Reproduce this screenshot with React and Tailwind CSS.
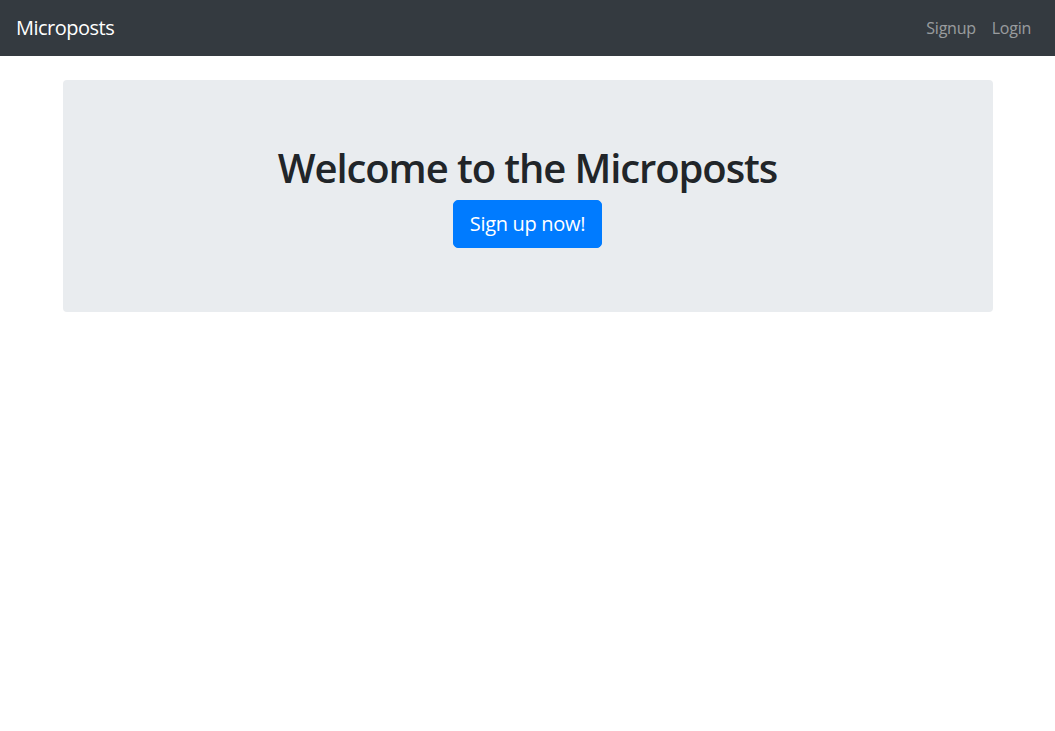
export default function App() {
  return (
    <div className="min-h-screen bg-white font-['Open_Sans','Noto_Sans',sans-serif] text-[#212529]">
      {/* Navbar */}
      <nav className="h-14 bg-[#343a40] flex items-center px-4">
        <a href="#" className="text-white text-[20px] leading-[30px] py-[5px] mr-4 tracking-[-0.5px]">Microposts</a>
        <ul className="ml-auto flex">
          <li><a href="#" className="block px-2 py-2 text-[16px] leading-6 text-white/50 tracking-[-0.25px]">Signup</a></li>
          <li><a href="#" className="block px-2 py-2 text-[16px] leading-6 text-white/50 tracking-[-0.25px]">Login</a></li>
        </ul>
      </nav>

      {/* Container */}
      <div className="w-[960px] mx-auto px-[15px] mt-6">
        <div className="bg-[#e9ecef] rounded py-16 px-8 flex flex-col items-center text-center">
          <h1 className="text-[40px] leading-[48px] font-semibold mb-2 tracking-[-1.1px]">Welcome to the Microposts</h1>
          <a href="#" className="inline-block bg-[#007bff] text-white text-[20px] leading-[30px] px-4 py-2 border border-[#007bff] rounded-[5px] tracking-[-0.3px]">
            Sign up now!
          </a>
        </div>
      </div>
    </div>
  )
}
